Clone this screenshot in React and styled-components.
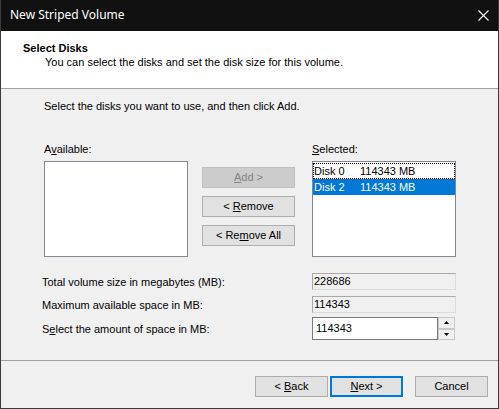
import React from 'react';
import styled, { createGlobalStyle } from 'styled-components';

const GlobalStyle = createGlobalStyle`
    html, body {
        margin: 0;
        padding: 0;
        background: #f0f0f0;
    }
    body {
        font-family: "Liberation Sans", Arial, sans-serif;
        font-size: 11px;
        line-height: 13px;
        color: #000;
    }
`;

const availableDisks = [];
const selectedDisks = [
    { name: 'Disk 0', size: '114343 MB', focused: true },
    { name: 'Disk 2', size: '114343 MB', selected: true },
];

const App = () => {
    return (
        <>
            <GlobalStyle />
            <Window>
                <TitleBar>
                    <TitleText>New Striped Volume</TitleText>
                    <CloseIcon width="11" height="11" viewBox="0 0 11 11">
                        <path d="M0.5 0.5 L10.5 10.5 M10.5 0.5 L0.5 10.5" stroke="#fff" strokeWidth="1.1" />
                    </CloseIcon>
                </TitleBar>

                <Header>
                    <HeaderTitle>Select Disks</HeaderTitle>
                    <HeaderSubtitle>
                        You can select the disks and set the disk size for this volume.
                    </HeaderSubtitle>
                </Header>

                <Body>
                    <Instruction>
                        Select the disks you want to use, and then click Add.
                    </Instruction>

                    <Picker>
                        <ListLabel>
                            A<Key>v</Key>ailable:
                        </ListLabel>
                        <span />
                        <ListLabel>
                            <Key>S</Key>elected:
                        </ListLabel>

                        <ListBox>
                            {availableDisks.map(d => (
                                <ListItem key={d.name}>
                                    <span>{d.name}</span>
                                    <span>{d.size}</span>
                                </ListItem>
                            ))}
                        </ListBox>

                        <MoveButtons>
                            <MoveButton disabled>
                                <span><Key>A</Key>dd &gt;</span>
                            </MoveButton>
                            <MoveButton>
                                <span>&lt; <Key>R</Key>emove</span>
                            </MoveButton>
                            <MoveButton>
                                <span>&lt; Re<Key>m</Key>ove All</span>
                            </MoveButton>
                        </MoveButtons>

                        <ListBox>
                            {selectedDisks.map(d => (
                                <ListItem
                                    key={d.name}
                                    selected={d.selected}
                                    focused={d.focused}
                                >
                                    <span>{d.name}</span>
                                    <span>{d.size}</span>
                                </ListItem>
                            ))}
                        </ListBox>
                    </Picker>

                    <Fields>
                        <FieldRow>
                            <FieldLabel>Total volume size in megabytes (MB):</FieldLabel>
                            <ReadOnlyField>228686</ReadOnlyField>
                        </FieldRow>

                        <FieldRow gap={6}>
                            <FieldLabel>Maximum available space in MB:</FieldLabel>
                            <ReadOnlyField>114343</ReadOnlyField>
                        </FieldRow>

                        <FieldRow gap={4}>
                            <FieldLabel>
                                S<Key>e</Key>lect the amount of space in MB:
                            </FieldLabel>
                            <Spinner>
                                <SpinInput>114343</SpinInput>
                                <SpinButtons>
                                    <SpinButton>
                                        <svg width="5" height="3" viewBox="0 0 5 3">
                                            <path d="M2.5 0 L5 3 L0 3 Z" fill="#000" />
                                        </svg>
                                    </SpinButton>
                                    <SpinButton>
                                        <svg width="5" height="3" viewBox="0 0 5 3">
                                            <path d="M0 0 L5 0 L2.5 3 Z" fill="#000" />
                                        </svg>
                                    </SpinButton>
                                </SpinButtons>
                            </Spinner>
                        </FieldRow>
                    </Fields>
                </Body>

                <Footer>
                    <WizardButton>
                        <span>&lt; <Key>B</Key>ack</span>
                    </WizardButton>
                    <WizardButton primary>
                        <span><Key>N</Key>ext &gt;</span>
                    </WizardButton>
                    <WizardButton cancel>Cancel</WizardButton>
                </Footer>
            </Window>
        </>
    );
};

const Window = styled.div`
    width: 499px;
    height: 409px;
    box-sizing: border-box;
    display: flex;
    flex-direction: column;
    border: 1px solid #3b3b3b;
    border-top: none;
    background: #f0f0f0;
    overflow: hidden;
`;

const TitleBar = styled.div`
    height: 31px;
    flex-shrink: 0;
    background: #111111;
    color: #fff;
    display: flex;
    align-items: center;
    justify-content: space-between;
    padding: 0 9px 0 9px;
`;

const TitleText = styled.span`
    font-family: "Noto Sans", "Open Sans", sans-serif;
    font-size: 12px;
    line-height: 16px;
    margin-top: -1px;
`;

const CloseIcon = styled.svg`
    display: block;
`;

const Header = styled.div`
    height: 58px;
    flex-shrink: 0;
    background: #fff;
    border-bottom: 1px solid #a0a0a0;
    padding: 11px 0 0 22px;
    box-sizing: border-box;
`;

const HeaderTitle = styled.div`
    font-weight: bold;
`;

const HeaderSubtitle = styled.div`
    margin-top: 1px;
    padding-left: 22px;
`;

const Body = styled.div`
    flex: 1;
    display: flex;
    flex-direction: column;
    padding: 11px 0 0 43px;
`;

const Instruction = styled.div`
    margin-bottom: 30px;
`;

const Key = styled.u`
    text-decoration-thickness: 1px;
    text-underline-offset: 1px;
`;

const Picker = styled.div`
    display: grid;
    grid-template-columns: 144px 124px 144px;
    grid-template-rows: auto 96px;
    row-gap: 5px;
`;

const ListLabel = styled.div``;

const ListBox = styled.div`
    background: #fff;
    border: 1px solid #828790;
    padding-top: 1px;
    box-sizing: border-box;
    display: flex;
    flex-direction: column;
`;

const ListItem = styled.div`
    height: 16px;
    display: grid;
    grid-template-columns: 46px auto;
    align-items: center;
    padding-left: 1px;
    box-sizing: border-box;
    background: ${props => (props.selected ? '#0078d7' : 'transparent')};
    color: ${props => (props.selected ? '#fff' : '#000')};
    outline: ${props => (props.focused ? '1px dotted #000' : 'none')};
    outline-offset: -1px;
`;

const MoveButtons = styled.div`
    display: flex;
    flex-direction: column;
    gap: 8px;
    padding: 6px 0 0 14px;
`;

const MoveButton = styled.div`
    width: 93px;
    height: 21px;
    box-sizing: border-box;
    display: flex;
    align-items: center;
    justify-content: center;
    background: ${props => (props.disabled ? '#cccccc' : '#e1e1e1')};
    border: 1px solid ${props => (props.disabled ? '#bfbfbf' : '#adadad')};
    color: ${props => (props.disabled ? '#838383' : '#000')};
`;

const Fields = styled.div`
    display: flex;
    flex-direction: column;
    margin: 16px 0 0 -2px;
`;

const FieldRow = styled.div`
    display: flex;
    align-items: center;
    margin-top: ${props => props.gap || 0}px;
`;

const FieldLabel = styled.div`
    width: 270px;
    padding-top: 1px;
`;

const ReadOnlyField = styled.div`
    width: 144px;
    height: 17px;
    box-sizing: border-box;
    border: 1px solid;
    border-color: #a9a9a9 #dcdcdc #dcdcdc #a9a9a9;
    background: #f0f0f0;
    padding-left: 1px;
    display: flex;
    align-items: center;
`;

const Spinner = styled.div`
    height: 23px;
    display: flex;
    width: 143px;
`;

const SpinInput = styled.div`
    flex: 1;
    background: #fff;
    border: 1px solid #7a7a7a;
    padding-left: 3px;
    display: flex;
    align-items: center;
`;

const SpinButtons = styled.div`
    width: 17px;
    display: flex;
    flex-direction: column;
`;

const SpinButton = styled.div`
    flex: 1;
    background: #f0f0f0;
    border: 1px solid #c8c8c8;
    box-sizing: border-box;
    display: flex;
    align-items: center;
    justify-content: center;

    svg {
        display: block;
    }
`;

const Footer = styled.div`
    height: 48px;
    flex-shrink: 0;
    box-sizing: border-box;
    border-top: 1px solid #a0a0a0;
    display: flex;
    justify-content: flex-end;
    align-items: flex-start;
    padding: 15px 10px 0 0;
`;

const WizardButton = styled.div`
    width: 73px;
    height: 21px;
    box-sizing: border-box;
    display: flex;
    align-items: center;
    justify-content: center;
    background: #e1e1e1;
    border: ${props => (props.primary ? '2px solid #0078d7' : '1px solid #adadad')};
    margin-left: ${props => (props.primary ? '2px' : props.cancel ? '12px' : '0')};
`;

export default App;
